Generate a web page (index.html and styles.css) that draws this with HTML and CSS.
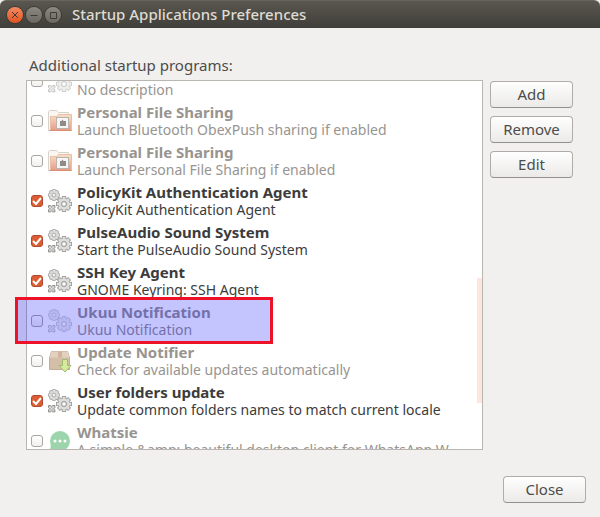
FILE: index.html
```
<!DOCTYPE html>
<html lang="en">
<head>
  <meta charset="UTF-8">
  <title>Startup Applications Preferences</title>
  <link rel="stylesheet" href="styles.css">
</head>
<body>
  <!-- Shared icons -->
  <svg class="sprites" aria-hidden="true">
    <defs>
      <linearGradient id="folderFill" x1="0" y1="0" x2="0" y2="1">
        <stop offset="0" stop-color="#f8dfc8"/>
        <stop offset="1" stop-color="#e99a80"/>
      </linearGradient>
      <g id="teeth">
        <rect x="-1.5" y="-7.5" width="3" height="15"/>
        <rect x="-1.5" y="-7.5" width="3" height="15" transform="rotate(45)"/>
        <rect x="-1.5" y="-7.5" width="3" height="15" transform="rotate(90)"/>
        <rect x="-1.5" y="-7.5" width="3" height="15" transform="rotate(135)"/>
        <circle r="5.6"/>
      </g>
      <g id="gear">
        <use href="#teeth" fill="#8c8c8a" stroke="#8c8c8a" stroke-width="1.4"/>
        <use href="#teeth" fill="#dededc"/>
        <circle r="2.8" fill="#d2d2d0" stroke="#a3a3a1" stroke-width="1"/>
        <circle r="1.4" fill="#fff"/>
      </g>
      <symbol id="gears" viewBox="0 0 24 24">
        <use href="#gear" transform="translate(6 6) scale(.7)"/>
        <use href="#gear" transform="translate(16 15) scale(.96)"/>
        <path d="M.5 16.5h2l1.2 1 1.2-1h2v2l-1 1.2 1 1.2v2h-2l-1.2-1-1.2 1h-2v-2l1-1.2-1-1.2z" fill="#d4d4d2" stroke="#8c8c8a"/>
        <circle cx="3.7" cy="19.7" r="1" fill="#fff" stroke="#999997" stroke-width=".6"/>
      </symbol>
      <symbol id="folder" viewBox="0 0 24 24">
        <path d="M.5 21.5v-19l1-1h7l2 2h10v18z" fill="#fbf5ef" stroke="#d8d2cc"/>
        <path d="M2.5 21.5V7.5h6l2-2h13v16z" fill="url(#folderFill)" stroke="#e8c0a8"/>
        <path d="M1 21.5h22.5" stroke="#d98d75"/>
        <rect x="8.5" y="8.5" width="12" height="11" fill="#f7f5f3" stroke="#bab4ae"/>
        <path d="M12 12h1.5l1-1.5 1 1.5H18v5h-6z" fill="#8e8b88"/>
      </symbol>
      <symbol id="package" viewBox="0 0 24 24">
        <path d="M1.5 8.5l2-6h16l2 6v12h-20z" fill="#d3bfa8" stroke="#c5ad97"/>
        <path d="M1.5 8.5l2-6h16l2 6z" fill="#e2d1bf"/>
        <path d="M10 2.5h4v6h-4z" fill="#d3b3a0"/>
        <path d="M14.5 10.5h5v6H23l-6 6.5-6-6.5h3.5z" fill="#d5ea9c" stroke="#9fbd72"/>
      </symbol>
      <symbol id="chat" viewBox="0 0 24 24">
        <circle cx="12" cy="12" r="10" fill="#9cd4ac"/>
        <path d="M3 15l-1 7 7-1z" fill="#9cd4ac"/>
        <circle cx="7" cy="12" r="1.5" fill="#fff"/>
        <circle cx="12" cy="12" r="1.5" fill="#fff"/>
        <circle cx="17" cy="12" r="1.5" fill="#fff"/>
      </symbol>
    </defs>
  </svg>

  <header class="titlebar">
    <button class="win-btn win-close" type="button" aria-label="Close window">
      <svg viewBox="0 0 16 16"><path d="M5 5l6 6m0-6l-6 6"/></svg>
    </button>
    <button class="win-btn" type="button" aria-label="Minimize">
      <svg viewBox="0 0 16 16"><path d="M4.5 8.5h7"/></svg>
    </button>
    <button class="win-btn" type="button" aria-label="Maximize">
      <svg viewBox="0 0 16 16"><path d="M5.5 5.5h6v6h-6z"/></svg>
    </button>
    <h1>Startup Applications Preferences</h1>
  </header>

  <main class="content">
    <h2 id="listLabel">Additional startup programs:</h2>
    <div class="columns">
      <div class="list-wrap">
        <div class="list">
          <ul class="programs" aria-labelledby="listLabel">
            <li><label class="program off">
              <input type="checkbox">
              <svg class="icon"><use href="#gears"/></svg>
              <span class="text"><b>&nbsp;</b><span>No description</span></span>
            </label></li>
            <li><label class="program off">
              <input type="checkbox">
              <svg class="icon solid"><use href="#folder"/></svg>
              <span class="text"><b>Personal File Sharing</b><span>Launch Bluetooth ObexPush sharing if enabled</span></span>
            </label></li>
            <li><label class="program off">
              <input type="checkbox">
              <svg class="icon solid"><use href="#folder"/></svg>
              <span class="text"><b>Personal File Sharing</b><span>Launch Personal File Sharing if enabled</span></span>
            </label></li>
            <li><label class="program">
              <input type="checkbox" checked>
              <svg class="icon"><use href="#gears"/></svg>
              <span class="text"><b>PolicyKit Authentication Agent</b><span>PolicyKit Authentication Agent</span></span>
            </label></li>
            <li><label class="program">
              <input type="checkbox" checked>
              <svg class="icon"><use href="#gears"/></svg>
              <span class="text"><b>PulseAudio Sound System</b><span>Start the PulseAudio Sound System</span></span>
            </label></li>
            <li><label class="program">
              <input type="checkbox" checked>
              <svg class="icon"><use href="#gears"/></svg>
              <span class="text"><b>SSH Key Agent</b><span>GNOME Keyring: SSH Agent</span></span>
            </label></li>
            <li><label class="program off">
              <input type="checkbox">
              <svg class="icon"><use href="#gears"/></svg>
              <span class="text"><b>Ukuu Notification</b><span>Ukuu Notification</span></span>
            </label></li>
            <li><label class="program off">
              <input type="checkbox">
              <svg class="icon solid"><use href="#package"/></svg>
              <span class="text"><b>Update Notifier</b><span>Check for available updates automatically</span></span>
            </label></li>
            <li><label class="program">
              <input type="checkbox" checked>
              <svg class="icon"><use href="#gears"/></svg>
              <span class="text"><b>User folders update</b><span>Update common folders names to match current locale</span></span>
            </label></li>
            <li><label class="program off">
              <input type="checkbox">
              <svg class="icon solid"><use href="#chat"/></svg>
              <span class="text"><b>Whatsie</b><span>A simple &amp;amp; beautiful desktop client for WhatsApp W</span></span>
            </label></li>
          </ul>
          <div class="scroll-thumb"></div>
        </div>
        <div class="highlight"></div>
      </div>
      <div class="actions">
        <button class="btn" type="button">Add</button>
        <button class="btn" type="button">Remove</button>
        <button class="btn" type="button">Edit</button>
      </div>
    </div>
  </main>

  <footer class="footer">
    <button class="btn" type="button">Close</button>
  </footer>
</body>
</html>
```

FILE: styles.css
```
* {
  box-sizing: border-box;
}
body {
  margin: 0;
  background: #f1f0ee;
  color: #4c4c4c;
  font: 15px/17px "Noto Sans", "Open Sans", sans-serif;
}
h1, h2, ul {
  margin: 0;
  padding: 0;
}
.sprites {
  position: absolute;
  width: 0;
  height: 0;
}

/* Title bar */
.titlebar {
  display: flex;
  align-items: center;
  gap: 3px;
  height: 28px;
  padding: 0 7px;
  border-top: 1px solid #66645b;
  border-radius: 6px 6px 0 0;
  background: linear-gradient(#59574f, #3f3e39);
}
.titlebar h1 {
  margin-left: 8px;
  color: #dfdbd2;
  font-size: 15px;
  font-weight: 500;
}
.win-btn {
  width: 16px;
  height: 16px;
  padding: 0;
  border: 0;
  border-radius: 50%;
  background: linear-gradient(#8b8981, #6a6861);
  box-shadow: 0 0 0 1px #3b3a35;
}
.win-btn svg {
  display: block;
  fill: none;
  stroke: #3c3b37;
}
.win-close {
  background: linear-gradient(#f58a64, #e2531f);
}

/* Program list */
.content {
  padding: 29px 27px 0 26px;
}
.content h2 {
  margin: 0 3px 6px;
  font-size: 15px;
  font-weight: 400;
}
.columns {
  display: flex;
  gap: 7px;
}
.list-wrap {
  position: relative;
  flex: 1;
  min-width: 0;
}
.list {
  position: relative;
  height: 370px;
  overflow: hidden;
  border: 1px solid #b9b6b1;
  background: #fff;
}
.programs {
  margin-top: -20px;
  list-style: none;
}
.program {
  display: flex;
  align-items: center;
  gap: 5px;
  height: 40px;
  padding-left: 4px;
  color: #3c3c3c;
  white-space: nowrap;
}
.program input {
  flex: none;
  width: 12px;
  height: 12px;
  margin: 0;
  appearance: none;
  border: 1px solid #aaa7a3;
  border-radius: 3px;
  background: linear-gradient(#fff, #f1f0ee);
}
.program input:checked {
  border-color: #b5472a;
  background: #dc5d33 url("data:image/svg+xml,%3Csvg xmlns='http://www.w3.org/2000/svg' viewBox='0 0 10 10'%3E%3Cpath d='M1 5l3 3 5-6' fill='none' stroke='white' stroke-width='2'/%3E%3C/svg%3E");
}
.icon {
  flex: none;
  width: 24px;
  height: 24px;
}
.text {
  display: flex;
  flex-direction: column;
}
.text span {
  font-size: 14px;
}
.off .text {
  color: #98948f;
}
.off .icon:not(.solid) {
  opacity: 0.5;
}
.scroll-thumb {
  position: absolute;
  top: 197px;
  right: 0;
  width: 5px;
  height: 125px;
  background: #fde6de;
}
.highlight {
  position: absolute;
  top: 217px;
  left: -11px;
  width: 258px;
  height: 47px;
  border: 3px solid #ee1228;
  background: rgba(0, 0, 255, 0.23);
  pointer-events: none;
}

/* Buttons */
.actions {
  display: flex;
  flex-direction: column;
  gap: 8px;
  padding-top: 1px;
}
.btn {
  width: 83px;
  height: 27px;
  padding: 0;
  border: 1px solid #b0ada9;
  border-bottom-color: #94918d;
  border-radius: 4px;
  background: linear-gradient(#fefefe, #ebeae8);
  color: #4c4c4c;
  font: inherit;
}
.footer {
  display: flex;
  justify-content: flex-end;
  padding: 26px 14px 14px;
}
```
